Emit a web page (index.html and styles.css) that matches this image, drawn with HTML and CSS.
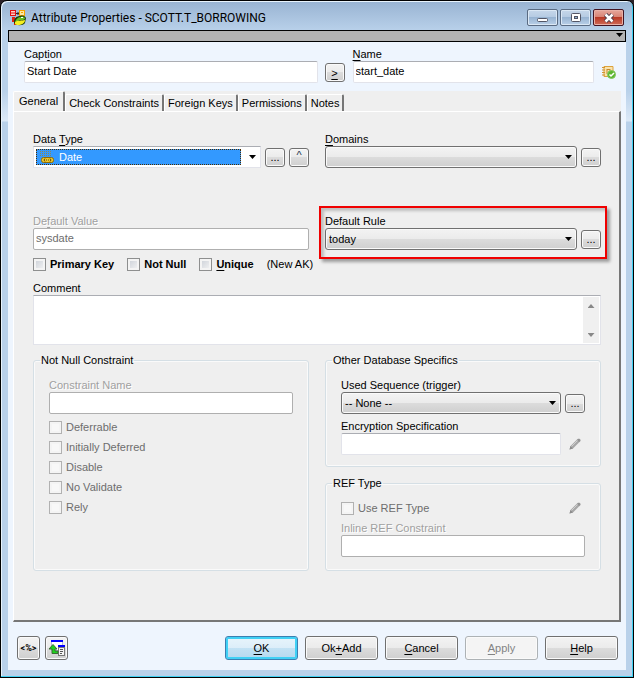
FILE: index.html
```html
<!DOCTYPE html>
<html lang="en">
<head>
<meta charset="utf-8">
<title>Attribute Properties - SCOTT.T_BORROWING</title>
<link rel="stylesheet" href="styles.css">
</head>
<body>
<svg class="defs" aria-hidden="true">
  <symbol id="pencil" viewBox="0 0 12 12">
    <path d="M0.500 11.500l1-3.500L7.500 2l2.500 2.500L4 10.500z" fill="#a8a8a8"/>
    <path d="M7.500 2L9 0.700h1.500l1 1V3L10 4.500z" fill="#949494"/>
    <path d="M2.500 8.500L8.500 2.500" stroke="#cfcfcf"/>
    <path d="M0.500 11.500l1-3.500L4 10.500z" fill="#8c8c8c"/>
  </symbol>
</svg>
<div class="window">
  <header class="titlebar">
    <svg class="app-icon" viewBox="0 0 16 16" aria-hidden="true">
      <rect x="0.500" y="0.500" width="5" height="5" fill="#ffd0c8" stroke="#e01010"/>
      <path d="M1 3h4" stroke="#e01010"/>
      <path d="M6 3.500h4M8 2v3" stroke="#33231c"/>
      <rect x="9.500" y="0.500" width="5" height="5" fill="#ffe9a0" stroke="#f5a200"/>
      <path d="M11 2.500h2" stroke="#f5a200"/>
      <path d="M2 7h3v2h1v6H4v-3H2z" fill="#e02010"/>
      <path d="M4 12c0-4 3-6 6-6 3-1 5 0 6 2l-1 5c-2 3-9 3-11 0z" fill="#1d3d10"/>
      <path d="M5 12c1-3 3-5 6-5 2-1 4 0 4 2l-2 1-3 0z" fill="#69bf22"/>
      <path d="M5 12c2-2 7-1 10-2 0 5-8 6-10 4z" fill="#f5ee20"/>
      <path d="M11 7.500h2" stroke="#fff"/>
    </svg>
    <h1>Attribute Properties - SCOTT.T_BORROWING</h1>
    <div class="win-buttons">
      <button class="win-btn" aria-label="Minimize"><svg viewBox="0 0 12 12"><rect x="0.500" y="6.500" width="10" height="3" rx="1" fill="#fff" stroke="#535666"/></svg></button>
      <button class="win-btn" aria-label="Maximize"><svg viewBox="0 0 12 12"><rect x="1.500" y="1.500" width="9" height="8" rx="1" fill="#fff" stroke="#535666"/><rect x="4.500" y="4.500" width="3" height="2" fill="#8fb0d0" stroke="#535666"/></svg></button>
      <button class="win-btn close" aria-label="Close"><svg viewBox="0 0 12 12"><path d="M2.500 2.500l7 7M9.500 2.500l-7 7" stroke="#4b3a48" stroke-width="4.500"/><path d="M2.500 2.500l7 7M9.500 2.500l-7 7" stroke="#fff" stroke-width="2.500"/></svg></button>
    </div>
  </header>
  <main class="client">
    <div class="strip"><span class="arrow"></span></div>
    <div class="names">
      <div class="field grow-wide">
        <label for="caption">Capt<u>i</u>on</label>
        <input id="caption" type="text" value="Start Date">
      </div>
      <button class="small-btn"><u>&gt;</u></button>
      <div class="field grow">
        <label for="name"><u>N</u>ame</label>
        <input id="name" type="text" value="start_date">
      </div>
      <svg class="check-icon" viewBox="0 0 14 14" aria-hidden="true">
        <path d="M2 1.500h9v10H2z" fill="#f8e3ae" stroke="#dda23c"/>
        <path d="M0 2.500h3M0 5h3M0 7.500h3M0 10h3" stroke="#d4952e"/>
        <path d="M5 4v5M5 4.500h3M8 4v2" stroke="#c98a2c"/>
        <circle cx="9.500" cy="9.500" r="4" fill="#5cb531" stroke="#83c960"/>
        <path d="M7.500 9.500l1.500 1.500 3-3" fill="none" stroke="#fff" stroke-width="1.500"/>
      </svg>
    </div>

    <div class="tabs" role="tablist">
      <button class="tab active" role="tab" aria-selected="true">General</button>
      <button class="tab" role="tab">Check Constraints</button>
      <button class="tab" role="tab">Foreign Keys</button>
      <button class="tab" role="tab">Permissions</button>
      <button class="tab" role="tab">Notes</button>
    </div>

    <section class="panel" role="tabpanel">
      <div class="columns">
        <div class="field">
          <label for="datatype">Data <u>T</u>ype</label>
          <div class="row">
            <div class="combo">
              <svg class="type-icon" viewBox="0 0 14 14" aria-hidden="true">
                <path d="M0 1.500h12M0 3.500h12M0 5.500h12" stroke="#8b8a55" stroke-dasharray="1 1"/>
                <rect x="1.500" y="7.500" width="12" height="5" rx="2" fill="#ecc72c" stroke="#8a6a08"/>
                <path d="M5 8.500l-1 1.500 1 1.500M10 8.500l1 1.500-1 1.500M6 10h1M8 10h1" fill="none" stroke="#5b4300"/>
              </svg>
              <select id="datatype"><option>Date</option></select>
              <span class="arrow"></span>
            </div>
            <button class="small-btn">...</button>
            <button class="small-btn caret">^</button>
          </div>
        </div>
        <div class="field">
          <label for="domains"><u>D</u>omains</label>
          <div class="row">
            <div class="select"><select id="domains"><option></option></select><span class="arrow"></span></div>
            <button class="small-btn">...</button>
          </div>
        </div>
      </div>

      <div class="columns defaults">
        <div class="field">
          <label class="off" for="defvalue">De<u>f</u>ault Value</label>
          <input id="defvalue" type="text" value="sysdate" disabled>
        </div>
        <div class="field marked">
          <label for="defrule">Default Rule</label>
          <div class="row">
            <div class="select"><select id="defrule"><option>today</option></select><span class="arrow"></span></div>
            <button class="small-btn">...</button>
          </div>
        </div>
      </div>

      <div class="keys">
        <label class="check bold"><input type="checkbox"><span>Primary Key</span></label>
        <label class="check bold"><input type="checkbox"><span>Not Null</span></label>
        <label class="check bold"><input type="checkbox"><span><u>U</u>nique</span></label>
        <span class="hint">(New AK)</span>
      </div>

      <div class="field comment">
        <label for="comment">Comment</label>
        <div class="memo">
          <textarea id="comment"></textarea>
          <div class="scroll"><span class="arrow up"></span><span class="arrow"></span></div>
        </div>
      </div>

      <div class="columns groups">
        <fieldset>
          <legend>Not Null Constraint</legend>
          <div class="field">
            <label class="off" for="cname">Constraint Name</label>
            <input id="cname" type="text" disabled>
          </div>
          <div class="checks">
            <label class="check dim"><input type="checkbox" disabled><span>Deferrable</span></label>
            <label class="check dim"><input type="checkbox" disabled><span>Initially Deferred</span></label>
            <label class="check dim"><input type="checkbox" disabled><span>Disable</span></label>
            <label class="check dim"><input type="checkbox" disabled><span>No Validate</span></label>
            <label class="check dim"><input type="checkbox" disabled><span>Rely</span></label>
          </div>
        </fieldset>
        <div class="stack">
          <fieldset>
            <legend>Other Database Specifics</legend>
            <div class="field">
              <label for="seq">Used Sequence (trigger)</label>
              <div class="row">
                <div class="select"><select id="seq"><option>-- None --</option></select><span class="arrow"></span></div>
                <button class="small-btn">...</button>
              </div>
            </div>
            <div class="field next">
              <label for="enc">Encryption Specification</label>
              <div class="row">
                <input id="enc" type="text">
                <button class="pencil-btn" aria-label="Edit" disabled><svg><use href="#pencil"/></svg></button>
              </div>
            </div>
          </fieldset>
          <fieldset>
            <legend>REF Type</legend>
            <div class="row ref">
              <label class="check dim"><input type="checkbox" disabled><span>Use REF Type</span></label>
              <button class="pencil-btn" aria-label="Edit" disabled><svg><use href="#pencil"/></svg></button>
            </div>
            <div class="field">
              <label class="off" for="inlineref">Inline REF Constraint</label>
              <input id="inlineref" type="text" disabled>
            </div>
          </fieldset>
        </div>
      </div>
    </section>

    <footer class="footer">
      <button class="btn icon code">&lt;%&gt;</button>
      <button class="btn icon" aria-label="Generate"><svg viewBox="0 0 16 16"><rect x="2.500" y="1.500" width="11" height="9" fill="#fff" stroke="#b9b9d8"/><path d="M2 1h12" stroke="#00f" stroke-width="2"/><path d="M9 6h7" stroke="#00f" stroke-width="2"/><rect x="9.500" y="7.500" width="6" height="8" fill="#f4f4f4" stroke="#777"/><path d="M11 9.500h3M11 11.500h3M11 13.500h2" stroke="#555"/><path d="M4 4.500l4 4.500H6v2h3v2.500H3V9H0z" fill="#1fd01f" stroke="#3b6b33"/></svg></button>
      <span class="space"></span>
      <button class="btn default"><u>O</u>K</button>
      <button class="btn">Ok<u>+</u>Add</button>
      <button class="btn"><u>C</u>ancel</button>
      <button class="btn" disabled><u>A</u>pply</button>
      <button class="btn"><u>H</u>elp</button>
    </footer>
  </main>
</div>
</body>
</html>
```
FILE: styles.css
```css
* { box-sizing: border-box; }

html, body { height: 100%; }

body {
  margin: 0;
  background: #2b2229;
  color: #000;
  font: 11px/14px "Liberation Sans", Arial, sans-serif;
}

button, input, select, textarea { font: inherit; color: inherit; margin: 0; }
.defs { display: none; }
u { text-decoration: underline; text-underline-offset: 2px; }

.window {
  display: flex;
  flex-direction: column;
  min-height: 100%;
  padding: 0 7px 7px;
  border: 1px solid #000;
  border-radius: 7px 7px 0 0;
  background: linear-gradient(#98b3d2, #b9d1ea 30px, #b9d1ea 90px, #dce9f7 120px, #b9d1ea 121px);
  box-shadow: inset -1px -1px #3fd0f2, inset 1px 1px #e8f3fc;
}

.titlebar { display: flex; height: 29px; padding-top: 4px; align-items: center; }
.app-icon { width: 16px; height: 16px; margin: 0 5px 0 2px; }
.titlebar h1 { flex: 1; margin: 0; font: 12px/16px Roboto, sans-serif; white-space: nowrap; }
.win-buttons { display: flex; gap: 2px; margin-right: 2px; }
.win-btn {
  display: grid;
  place-items: center;
  width: 31px;
  height: 17px;
  padding: 0;
  border: 1px solid #5a6b82;
  border-radius: 2px;
  background: linear-gradient(#c6d7ea, #b4cae2 50%, #98b4d2 50%, #bad0e8);
  box-shadow: inset 0 0 0 1px #dbe8f5;
}
.win-btn svg { width: 12px; height: 12px; }
.win-btn.close {
  border-color: #431422;
  background: linear-gradient(#e6a79b, #d78172 50%, #b93a26 50%, #cf6b58);
  box-shadow: inset 0 0 0 1px #e9b0a6;
}

.client { display: flex; flex-direction: column; flex: 1; background: #eef5fe; }
.strip {
  display: flex;
  justify-content: flex-end;
  height: 12px;
  padding: 2px 2px 0 0;
  border: 1px solid #000;
  background: #b2b2b2;
}

.arrow { width: 7px; height: 4px; background: #000; clip-path: polygon(0 0, 100% 0, 50% 100%); }
.arrow.up { clip-path: polygon(0 100%, 100% 100%, 50% 0); }

.names { display: flex; align-items: flex-end; padding: 5px 10px 8px 16px; }
.names .small-btn { margin: 0 8px 1px 7px; }
.grow-wide { flex: 293 1 0; }
.grow { flex: 241 1 0; }
.check-icon { width: 14px; height: 14px; margin: 0 0 4px 8px; }

.field { display: flex; flex-direction: column; min-width: 0; }
.off { color: #a0a0a0; text-shadow: 1px 1px #fff; }
.row { display: flex; align-items: center; gap: 4px; }

input[type="text"] {
  width: 100%;
  min-width: 0;
  height: 22px;
  padding: 0 2px 2px;
  border: 1px solid #e2e3ea;
  border-top-color: #abadb3;
  border-radius: 2px;
  background: #fff;
}
input[type="text"]:disabled { border-color: #afafaf; color: #6d6d6d; }

.small-btn, .btn, .select select {
  border: 1px solid #707070;
  border-radius: 3px;
  background: linear-gradient(#f3f3f3, #ebebeb 50%, #dcdcdc 50%, #cfcfcf);
  box-shadow: inset 0 0 0 1px #fafafa;
}
.small-btn { flex: none; width: 20px; height: 19px; padding: 0; line-height: 16px; }
.small-btn.caret { padding-bottom: 4px; line-height: 12px; color: #24364f; }

.select, .combo { position: relative; display: flex; flex: 1; min-width: 0; height: 22px; }
.select select { width: 100%; padding: 0 20px 0 3px; appearance: none; }
.select .arrow { position: absolute; right: 5px; top: 9px; pointer-events: none; }

.combo {
  align-items: center;
  padding: 2px 4px 2px 2px;
  border: 1px solid #e2e3ea;
  border-top-color: #abadb3;
  background: #fff;
}
.combo select {
  flex: 1;
  height: 16px;
  margin-right: 8px;
  padding: 0 0 0 22px;
  border: 1px dotted #4a2c00;
  border-radius: 0;
  background: #3399ff;
  color: #fff;
  appearance: none;
}
.type-icon { position: absolute; left: 6px; top: 3px; width: 14px; height: 14px; pointer-events: none; }

.tabs { display: flex; align-items: flex-end; height: 20px; margin: 0 5px; background: #efefef; }
.tab {
  height: 17px;
  padding: 0 3px;
  border: solid #fff;
  border-width: 1px 2px 0 1px;
  border-right-color: #767676;
  border-radius: 2px 2px 0 0;
  background: #efefef;
}
.tab.active { height: 20px; padding: 0 5px 2px; }

.panel {
  flex: 1;
  margin: 0 5px;
  padding: 20px 18px 40px 19px;
  border: solid #fff;
  border-width: 1px 2px 2px 1px;
  border-right-color: #777;
  border-bottom-color: #777;
  background: #efefef;
}

.columns { display: grid; grid-template-columns: minmax(0, 1fr) minmax(0, 1fr); gap: 16px; }
.defaults { margin-top: 46px; }

.marked { position: relative; }
.marked::after {
  content: "";
  position: absolute;
  inset: -8px -6px -9px -6px;
  border: 2px solid #f00000;
  box-shadow: 3px 3px 3px rgba(0, 0, 0, .35), inset 3px 3px 3px rgba(0, 0, 0, .2);
  pointer-events: none;
}

.keys { display: flex; margin-top: 7px; }
.check { display: flex; align-items: center; gap: 4px; height: 14px; }
.check input {
  width: 13px;
  height: 13px;
  border: 1px solid #8e8f8f;
  background: linear-gradient(135deg, #c9ced6, #f6f6f6);
  box-shadow: inset 0 0 0 2px #f4f4f4;
  appearance: none;
}
.check input:disabled { border-color: #b1b1b1; background: #f8f8f8; }
.dim { color: #6d6d6d; }
.bold { margin-right: 13px; font-weight: bold; }

.comment { margin-top: 10px; }
.memo {
  display: flex;
  height: 50px;
  padding: 1px;
  border: 1px solid #e2e3ea;
  border-top-color: #abadb3;
  background: #fff;
}
.memo textarea { flex: 1; padding: 2px; border: 0; outline: 0; resize: none; background: none; }
.scroll {
  display: flex;
  flex-direction: column;
  justify-content: space-between;
  align-items: center;
  width: 16px;
  padding: 7px 0 6px;
  background: #f0f0f0;
}
.scroll .arrow { background: #888; }

.groups { min-height: 218px; margin-top: 8px; }
fieldset {
  min-width: 0;
  margin: 0;
  padding: 11px 15px;
  border: 1px solid #d5dfe5;
  border-radius: 3px;
  box-shadow: inset 0 0 0 1px #fafafa;
}
legend { margin-left: -9px; padding: 0 1px; }
.stack { display: flex; flex-direction: column; gap: 9px; }
.stack fieldset:last-child { flex: 1; }
.next { margin-top: 5px; }
.checks { display: flex; flex-direction: column; gap: 6px; margin-top: 6px; }
.ref { justify-content: space-between; margin-bottom: 6px; }

.pencil-btn { flex: none; display: grid; place-items: center; width: 20px; height: 14px; padding: 0; border: 0; background: none; }
.pencil-btn svg { width: 12px; height: 12px; }

.footer { display: flex; gap: 7px; padding: 14px 8px 10px 9px; }
.space { flex: 1; }
.btn { width: 73px; height: 24px; padding: 0; }
.btn.icon { display: grid; place-items: center; width: 23px; margin-right: -2px; }
.btn.icon svg { width: 16px; height: 16px; }
.btn.code { font: bold 9px/12px Roboto, sans-serif; }
.btn.default {
  border-color: #3c7fb1;
  background: linear-gradient(#e8f4fb, #dceef9 50%, #c3e2f4 50%, #b5d8ee);
  box-shadow: inset 0 0 0 2px #40d0f5;
}
.btn:disabled { border-color: #adb2b5; background: #f4f4f4; color: #838383; }
```
